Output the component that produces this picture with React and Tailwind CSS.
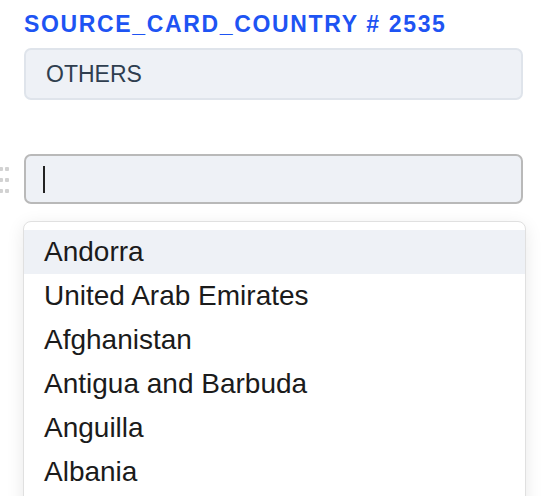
const countries = [
  'Andorra',
  'United Arab Emirates',
  'Afghanistan',
  'Antigua and Barbuda',
  'Anguilla',
  'Albania',
];

function DragHandle() {
  return (
    <div className="grid grid-cols-2 gap-x-[2px] gap-y-[7px] w-[10px] -ml-[1px]">
      {[0, 1, 2, 3, 4, 5].map((i) => (
        <span key={i} className="block w-[4px] h-[4px] rounded-[1px] bg-[#d2d2d2]" />
      ))}
    </div>
  );
}

export default function App() {
  return (
    <div className="w-[554px] h-[496px] overflow-hidden bg-white font-['Liberation_Sans',Arial,Helvetica,sans-serif]">
      {/* Field label + current value */}
      <div className="pl-[24px] pr-[31px] pt-[10px]">
        <h2 className="text-[23px] leading-[28px] font-bold tracking-[1.65px] text-[#1e54f3]">
          SOURCE_CARD_COUNTRY # 2535
        </h2>
        <div className="mt-[10px] h-[52px] flex items-center px-[20px] bg-[#eef1f6] border-2 border-[#dfe4eb] rounded-[7px]">
          <span className="text-[23px] text-[#2f3e4f]">OTHERS</span>
        </div>
      </div>

      {/* Search input */}
      <div className="mt-[54px] flex items-center">
        <div className="w-[24px] flex items-center pt-[2px]">
          <DragHandle />
        </div>
        <div className="w-[499px] h-[50px] flex items-center px-[17px] bg-[#eef1f6] border-2 border-[#b9b9b9] rounded-[7px]">
          <span className="block w-[2px] h-[27px] bg-[#222]" />
        </div>
      </div>

      {/* Options list */}
      <div className="ml-[23px] mr-[28px] mt-[17px] pt-2 pb-6 bg-white border border-[#e0e0e0] rounded-[8px] shadow-[0_4px_18px_rgba(0,0,0,0.09)]">
        {countries.map((c, i) => (
          <div
            key={c}
            className={`h-[44px] flex items-center px-[20px] text-[28px] text-[#1b1b1b] ${
              i === 0 ? 'bg-[#eef1f6]' : ''
            }`}
          >
            {c}
          </div>
        ))}
      </div>
    </div>
  );
}
